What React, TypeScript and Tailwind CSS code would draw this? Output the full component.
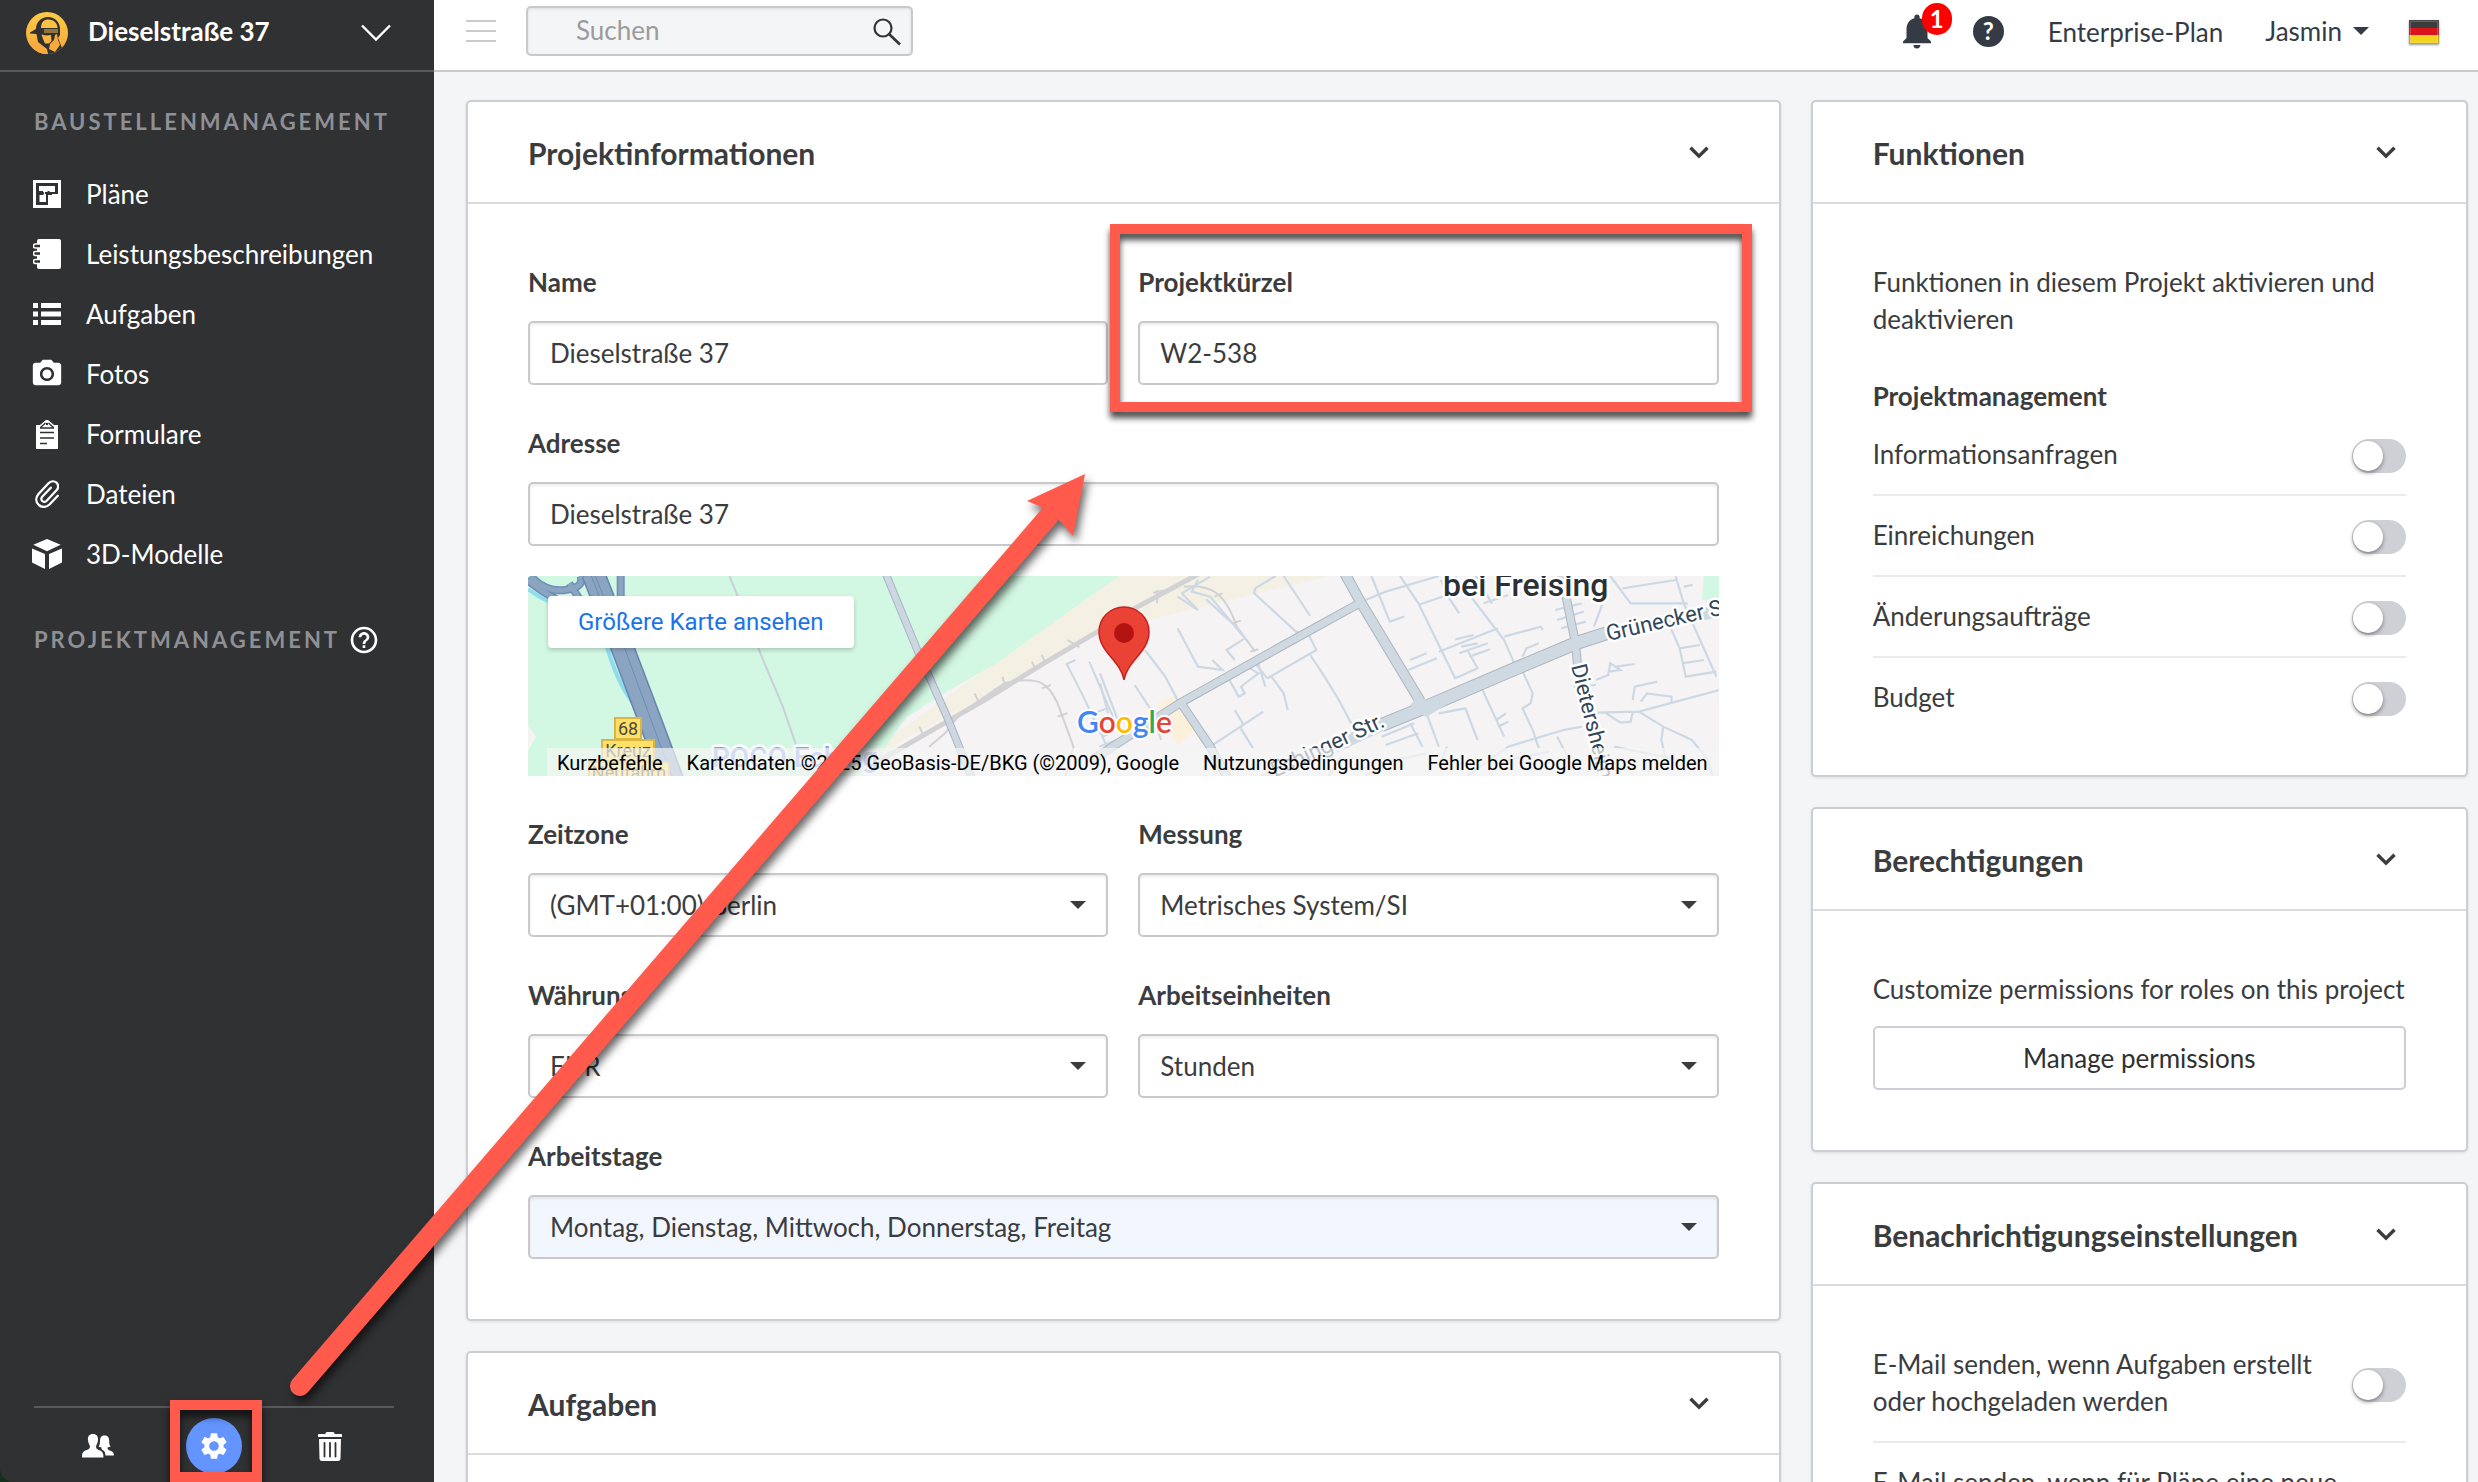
import React from "react";
import { MdHelpOutline, MdNotifications, MdPhotoCamera, MdSettings } from "react-icons/md";

type IconProps = { className?: string };

const LogoIcon = () => (
  <svg viewBox="0 0 42 42" className="size-[42px] shrink-0" aria-hidden="true">
    <defs>
      <linearGradient id="logo-fill" x1="0" y1="0" x2="0" y2="1">
        <stop offset="0" stopColor="#fccb46" />
        <stop offset="1" stopColor="#f7a63c" />
      </linearGradient>
      <clipPath id="logo-clip">
        <circle cx="21" cy="21" r="21" />
      </clipPath>
    </defs>
    <g clipPath="url(#logo-clip)">
      <rect width="42" height="42" fill="url(#logo-fill)" />
      <path
        d="M4 20.500L10 17C10 10 15 5 22 5C29 5 34 10 34 17V23L32 26L36 36L30 42H22L21 37L12 30L10.500 22L4 21.500Z"
        fill="#303133"
      />
      <path d="M15 16C15 10 18 7.500 22.500 7.500C27.500 7.500 31.500 11 31.500 16Z" fill="#fbc044" />
      <path d="M18 18H32M18 20H32" stroke="#f9b53f" strokeWidth="1" />
      <path d="M15.500 22.500L20 23.500L25 23L25.500 29L23 31.500H19L17 27Z" fill="#f9b53f" />
      <path d="M31 22L32 28L34 33L29 40L23 37L24 32L28 28L29 23Z" fill="#f8aa3c" />
      <path d="M4 29L12 31L20 38L22 42H8Z" fill="#f8aa3c" />
    </g>
  </svg>
);

const PlanIcon = ({ className }: IconProps) => (
  <svg viewBox="0 0 28 28" className={className} fill="currentColor" aria-hidden="true">
    <path fillRule="evenodd" d="M0 0H28V28H0Z M3 3V25H15V15H19V14H25V3Z" />
    <path d="M6 6H22V12H16.500V11H14.500V12H12V14H13V22H6.500V15H10V11H6Z" />
    <path d="M8.500 12.200H11V14.500H8.500Z" fill="#303133" />
  </svg>
);

const NotebookIcon = ({ className }: IconProps) => (
  <svg viewBox="0 0 28 30" className={className} aria-hidden="true">
    <rect x="4" y="0" width="24" height="30" rx="2" fill="currentColor" />
    <path
      d="M7 5H2.500a1.500 1.500 0 0 0 0 4H7M7 12.500H2.500a1.500 1.500 0 0 0 0 4H7M7 20.500H2.500a1.500 1.500 0 0 0 0 4H7"
      fill="#303133"
      stroke="currentColor"
      strokeWidth="1.500"
    />
  </svg>
);

const ListIcon = ({ className }: IconProps) => (
  <svg viewBox="0 0 28 22" className={className} fill="currentColor" aria-hidden="true">
    <path d="M0 0H5V5H0ZM8 0H28V5H8ZM0 8.500H5V13.500H0ZM8 8.500H28V13.500H8ZM0 17H5V22H0ZM8 17H28V22H8Z" />
  </svg>
);

const ClipboardIcon = ({ className }: IconProps) => (
  <svg viewBox="0 0 22 29" className={className} aria-hidden="true">
    <path d="M0 5H4L9 .800a3 3 0 0 1 4 0L18 5H22V29H0Z" fill="currentColor" />
    <path d="M4 8H18M4.500 7.500L9.500 3M17.500 7.500L12.500 3" stroke="#303133" strokeWidth="1.300" fill="none" />
    <circle cx="11" cy="4" r="1.200" fill="#303133" />
    <path d="M4 12.500H18M4 18H18M4 23.500H11" stroke="#303133" strokeWidth="1.600" />
  </svg>
);

const ClipIcon = ({ className }: IconProps) => (
  <svg viewBox="0 0 24 28" className={className} fill="none" stroke="currentColor" strokeWidth="2.300" strokeLinecap="round" aria-hidden="true">
    <path d="M22.800 15.800L14.500 24.500C11.500 27.500 7 27.700 3.800 25 C.500 22 .500 17.500 3.500 14L13.500 3.300C15.800 .900 19.300 .700 21.500 2.700C23.700 4.800 23.700 8 21.500 10.300L11.700 20.700C10.300 22.100 8.500 22.100 7.300 21C6 19.800 6 18 7.400 16.500L15.800 7.700" />
  </svg>
);

const CubeIcon = ({ className }: IconProps) => (
  <svg viewBox="0 0 30 30" className={className} fill="currentColor" aria-hidden="true">
    <path d="M1.300 5.800L15 0L28.700 5.800L15 12.300ZM0 9.500L13 15V30L0 23.500ZM30 9.500L17 15V30L30 23.500Z" />
  </svg>
);

const PeopleIcon = ({ className }: IconProps) => (
  <svg viewBox="0 0 32 24" className={className} fill="currentColor" aria-hidden="true">
    <path d="M11 0C7.500 0 5.600 2.300 6 6C6.200 9 7.500 10.500 8 12.500C8 15 6 15.500 4 16.200C.800 17.400 0 19 0 23.500H21.500C21.500 19 20.500 17.400 17.500 16.200C15.500 15.500 14 15 14 12.500C14.600 10.500 15.800 9 16 6C16.300 2.300 14.500 0 11 0Z" />
    <path d="M22.500 1.500C19.300 1.500 18 3.500 18 7C17.900 10 17.500 11.500 16.500 12.500C18 13.200 18.800 13.300 19.500 13.400C19.500 15.500 19.500 15.500 21.500 16.500C23 17.500 23.300 19.500 23.500 21.500H32C32 18.800 31 17.500 28.500 16.700C26.500 16 25.500 15.500 25.500 13.400C26.500 13.300 27.500 13 28.800 12.500C27.500 11.500 27.200 10 27.200 7C27.200 3.500 25.800 1.500 22.500 1.500Z" />
  </svg>
);

const TrashIcon = ({ className }: IconProps) => (
  <svg viewBox="0 0 24 29" className={className} aria-hidden="true">
    <path d="M1 2H7L8.500 0H15.500L17 2H23a1 1 0 0 1 1 1V5H0V3a1 1 0 0 1 1-1ZM1 7H23L22.500 26.500C22.500 28 21.500 29 20 29H4C2.500 29 1.500 28 1.500 26.500Z" fill="currentColor" />
    <path d="M6.500 11V24.500M12 11V24.500M17.500 11V24.500" stroke="#303133" strokeWidth="1.800" strokeLinecap="round" />
  </svg>
);

const Caret = ({ className }: IconProps) => (
  <svg viewBox="0 0 16 8" className={className} fill="currentColor" aria-hidden="true">
    <path d="M0 0H16L8 8Z" />
  </svg>
);

const ChevronSmall = () => (
  <svg viewBox="0 0 20 13" className="h-[13px] w-5" fill="none" stroke="currentColor" strokeWidth="3.400" aria-hidden="true">
    <path d="M1.500 1.800L10 10.200L18.500 1.800" />
  </svg>
);

const GermanFlag = () => (
  <svg viewBox="0 0 30 24" className="h-6 w-[30px] drop-shadow-[0_1px_1px_rgba(0,0,0,0.4)]" role="img" aria-label="Deutsch">
    <rect width="30" height="8" fill="#3c3c3c" />
    <rect y="8" width="30" height="7" fill="#d9141b" />
    <rect y="15" width="30" height="9" fill="#f3d31c" />
    <rect x="1" y="1" width="28" height="22" fill="none" stroke="#ffffff" strokeOpacity="0.200" strokeWidth="2" />
    <rect x=".5" y=".5" width="29" height="23" fill="none" stroke="#000000" strokeOpacity="0.250" />
  </svg>
);

const navItems = [
  { label: "Pläne", icon: <PlanIcon className="size-7" /> },
  { label: "Leistungsbeschreibungen", icon: <NotebookIcon className="h-[30px] w-7" /> },
  { label: "Aufgaben", icon: <ListIcon className="h-[22px] w-7" /> },
  { label: "Fotos", icon: <MdPhotoCamera className="size-[34px]" /> },
  { label: "Formulare", icon: <ClipboardIcon className="h-[29px] w-[22px]" /> },
  { label: "Dateien", icon: <ClipIcon className="h-7 w-6" /> },
  { label: "3D-Modelle", icon: <CubeIcon className="size-[30px]" /> },
];

function Sidebar() {
  return (
    <div className="w-[434px] shrink-0 bg-[#16301c]">
      <aside className="flex h-full flex-col rounded-bl-[14px] bg-[#303133] text-white">
        <button type="button" className="flex h-[72px] shrink-0 items-center border-b-2 border-[#58595b] pr-[43px] pb-1 pl-[26px] text-left">
          <LogoIcon />
          <span className="ml-5 flex-1 pb-1 text-[26px] leading-8 font-bold">Dieselstraße 37</span>
          <svg viewBox="0 0 30 18" className="h-[18px] w-[30px]" fill="none" stroke="currentColor" strokeWidth="2.400" aria-hidden="true">
            <path d="M1 1.500L15 15.500L29 1.500" />
          </svg>
        </button>
        <h2 className="mt-[30px] pl-[34px] text-[22px] leading-10 font-bold tracking-[3px] text-[#8f9096]">BAUSTELLENMANAGEMENT</h2>
        <nav className="mt-[22px]">
          <ul>
            {navItems.map((item) => (
              <li key={item.label}>
                <a href="#" className="flex h-[60px] items-center">
                  <span className="ml-[30px] flex w-[34px] shrink-0 justify-center">{item.icon}</span>
                  <span className="ml-[22px] text-[26px] leading-8">{item.label}</span>
                </a>
              </li>
            ))}
          </ul>
        </nav>
        <div className="mt-9 flex items-center gap-2 pl-[34px]">
          <h2 className="text-[22px] leading-10 font-bold tracking-[3px] text-[#8f9096]">PROJEKTMANAGEMENT</h2>
          <button type="button" aria-label="Hilfe zum Projektmanagement">
            <MdHelpOutline className="size-8" />
          </button>
        </div>
        <footer className="mr-10 ml-[34px] mt-auto grid h-[76px] grid-cols-3 items-center border-t-2 border-[#58595b] pt-[2px]">
          <button type="button" aria-label="Benutzer" className="flex justify-center pl-2">
            <PeopleIcon className="h-6 w-8" />
          </button>
          <div className="relative flex justify-center">
            <button type="button" aria-label="Einstellungen" className="flex size-14 items-center justify-center rounded-full bg-[#6394ff]">
              <MdSettings className="size-8" />
            </button>
            <div className="pointer-events-none absolute -top-[18px] right-3 left-4 h-[82px] border-10 border-[#ff5a4b] drop-shadow-[0_6px_4px_rgba(0,0,0,0.7)]" />
          </div>
          <button type="button" aria-label="Löschen" className="flex justify-center pr-2">
            <TrashIcon className="h-[29px] w-6" />
          </button>
        </footer>
      </aside>
    </div>
  );
}

function TopBar() {
  return (
    <header className="flex h-[72px] shrink-0 items-center border-b-2 border-[#c9c9cb] bg-white pr-[39px] pb-2 pl-8 text-[#353b45]">
      <button type="button" aria-label="Menü" className="flex w-[30px] flex-col gap-2">
        <span className="h-[2px] bg-[#cbcbcd]" />
        <span className="h-[2px] bg-[#cbcbcd]" />
        <span className="h-[2px] bg-[#cbcbcd]" />
      </button>
      <form role="search" className="relative ml-[30px] h-[50px] w-[387px]">
        <input
          type="search"
          aria-label="Suchen"
          placeholder="Suchen"
          className="h-full w-full rounded-[5px] border-2 border-[#c8c9cb] bg-[#f4f5f7] pr-14 pb-[2px] pl-12 text-[26px] shadow-[inset_0_1px_3px_rgba(0,0,0,0.1)] outline-none placeholder:text-[#9b9b9b]"
        />
        <svg viewBox="0 0 28 28" className="absolute top-3 right-3 size-7" fill="none" stroke="#333436" strokeWidth="2.200" aria-hidden="true">
          <circle cx="10" cy="10" r="8.500" />
          <path d="M16 16L27 26.500" strokeWidth="2.600" />
        </svg>
      </form>
      <div className="ml-auto flex items-center text-[26px]">
        <button type="button" aria-label="Benachrichtigungen" className="relative mr-[35px]">
          <MdNotifications className="size-[42px]" />
          <span className="absolute -top-[7px] -right-[14px] flex h-8 w-[30px] items-center justify-center rounded-full bg-[#ff0000] text-[24px] leading-none font-bold text-white">
            1
          </span>
        </button>
        <button type="button" aria-label="Hilfe" className="flex size-[31px] items-center justify-center rounded-full bg-[#353b45] text-[24px] leading-none font-bold text-white">
          ?
        </button>
        <a href="#" className="ml-[44px] pt-[2px]">Enterprise-Plan</a>
        <button type="button" className="ml-[42px] flex items-center gap-[11px]">
          Jasmin
          <Caret className="h-2 w-4" />
        </button>
        <button type="button" className="ml-[40px] pt-[2px]">
          <GermanFlag />
        </button>
      </div>
    </header>
  );
}

function Card({ title, children }: { title: string; children?: React.ReactNode }) {
  return (
    <section className="rounded-[5px] border-2 border-[#cdced3] bg-white shadow-[0_1px_3px_rgba(0,0,0,0.1)]">
      <header className="flex h-[102px] items-center justify-between border-b-2 border-[#dbdbdd] pr-[70px] pl-[60px]">
        <h2 className="pt-[2px] text-[30px] leading-10 font-bold">{title}</h2>
        <button type="button" aria-label={`${title} ein- oder ausklappen`}>
          <ChevronSmall />
        </button>
      </header>
      {children}
    </section>
  );
}

const fieldBox =
  "h-16 w-full appearance-none rounded-[5px] border-2 border-[#c9c9cb] px-5 text-[26px] shadow-[inset_0_2px_3px_rgba(0,0,0,0.08)] outline-none";

function Field({ id, label, children, className = "" }: { id: string; label: string; children: React.ReactNode; className?: string }) {
  return (
    <div className={`relative min-w-0 ${className}`}>
      <label htmlFor={id} className="mb-[21px] block text-[26px] leading-9 font-bold">
        {label}
      </label>
      {children}
    </div>
  );
}

function SelectField({ id, label, value, className, tint = false }: { id: string; label: string; value: string; className?: string; tint?: boolean }) {
  return (
    <Field id={id} label={label} className={className}>
      <div className="relative">
        <select id={id} className={`${fieldBox} ${tint ? "bg-[#f2f6fe]" : "bg-white"} pr-14`}>
          <option>{value}</option>
        </select>
        <Caret className="pointer-events-none absolute top-7 right-[22px] h-2 w-4" />
      </div>
    </Field>
  );
}

const minorRoads = [
  "M200 100L270 50M200 100L240 150L190 110M240 60L225 95L270 110L355 235L310 270L330 300",
  "M190 205L240 320L300 330L275 300M260 118L325 190M380 85L430 48M380 85L378 100L480 215L510 222L530 270L410 355",
  "M450 48L515 168M310 345L340 410L355 400L345 380L388 340L360 320",
  "M385 300L405 380M380 310L410 355M420 350L450 400L460 450M515 285L550 350L585 420L620 500",
  "M0 340L50 500M85 375L125 450L150 540M110 270L160 350L190 420M0 370L20 460",
  "M270 560L400 455M345 505L375 565M345 505L350 490L330 450",
  "M665 48L710 185L745 170M650 120L700 95L830 48M735 48L780 130L870 355L925 325L900 270",
  "M780 135L850 105L880 160M850 100L835 60M830 275L975 205M870 238L915 225M885 260L925 250M880 280L950 250M905 290L955 268",
  "M870 48L990 240L1015 310M940 130L1000 105M990 230L1080 200L1085 210M920 48L960 130M755 330L825 295M760 300L800 280",
  "M1030 320L1060 400L1055 430L1035 445L1060 510L1075 565M935 385L990 530M970 480L995 460M975 500L1000 485",
  "M830 460L895 445L925 540M800 460L830 560M700 555L780 520M690 530L770 490M760 490L790 560M900 648L1000 560L1135 510L1180 500",
  "M1035 290L1045 265L1075 250M1115 150L1180 130M1120 180L1185 155M1130 205L1190 185M1230 135L1210 200",
  "M1250 48L1300 130L1440 130M1280 85L1410 60M1410 48L1430 130L1470 240L1510 350M1430 80L1452 75",
  "M1390 180L1420 265L1470 255M1420 265L1435 350L1510 335M1425 310L1480 300",
  "M1215 458L1320 455L1517 390M1240 460L1275 488L1300 485L1305 455M1320 455L1380 500L1450 540L1490 600L1500 648",
  "M1305 420L1310 380L1365 365M1325 425L1340 400L1400 410L1400 430M1380 500L1375 540L1385 590M1215 360L1245 345L1250 310L1275 330L1245 335M1265 320L1310 312",
  "M650 648L720 600L800 580M520 600L610 560M560 648L590 590M1000 600L1100 575M1120 530L1150 600M850 560L830 620M1260 560L1420 600M1160 380L1215 375",
];

function MapView() {
  return (
    <div className="relative mt-[30px] h-[200px] overflow-hidden bg-[#f5f3f4] font-['Roboto',sans-serif]">
      <svg viewBox="0 0 1191 200" preserveAspectRatio="xMinYMin slice" className="block h-full w-full" role="img" aria-label="Karte von Dieselstraße 37">
        <g transform="translate(-18 -16) scale(0.3954 0.3333)" fill="none">
          <path d="M860 648L930 560L1540 40H2100L1490 215L1130 455L985 545L900 648Z" fill="#f4f0e4" />
          <path d="M46 48H1540L1230 310L1090 405L1000 475L950 560L910 648H46Z" fill="#d2f7e2" />
          <path d="M46 495L66 530L46 570Z" fill="#f5f3f4" />
          <path d="M46 88L75 110L100 125M245 260Q270 360 300 410T345 520L365 570" stroke="#8edcf0" strokeWidth="4" vectorEffect="non-scaling-stroke" />
          <path d="M52 48Q90 98 140 90T178 48M46 62Q80 95 120 120M150 70L175 115M280 48V110" stroke="#6d8eb4" strokeWidth="8" vectorEffect="non-scaling-stroke" />
          <path d="M52 48Q90 98 140 90T178 48M46 62Q80 95 120 120M150 70L175 115M280 48V110" stroke="#8aa4c2" strokeWidth="5" vectorEffect="non-scaling-stroke" />
          <path d="M210 40L285 265L360 500L410 660" stroke="#6485ae" strokeWidth="24" vectorEffect="non-scaling-stroke" />
          <path d="M210 40L285 265L360 500L410 660" stroke="#8aa4c2" strokeWidth="21" vectorEffect="non-scaling-stroke" />
          <path d="M213 40L290 265L363 500L413 660M203 40L278 265" stroke="#6d8eb4" strokeWidth="1" vectorEffect="non-scaling-stroke" />
          <path d="M555 48L585 135L640 300L690 440L725 560" stroke="#c9d0d8" strokeWidth="2" vectorEffect="non-scaling-stroke" />
          <path d="M930 605L1200 420L1350 310L1500 205L1580 145L1760 30" stroke="#d2d2d5" strokeWidth="5" vectorEffect="non-scaling-stroke" />
          <path d="M1060 560L1100 520L1140 460L1250 370C1340 345 1360 370 1385 430L1425 560L1405 648M1035 500L1045 525M1175 400L1185 425M1225 385L1232 405M1245 350L1252 375M1320 305L1330 330M1345 285L1352 305M1410 240L1440 262M1385 470L1410 460M1345 385L1368 375" stroke="#d2d2d5" strokeWidth="2" vectorEffect="non-scaling-stroke" />
          <path d="M1430 300L1408 312L1450 410L1510 560L1568 530M1465 305L1525 470M1475 460L1510 445M1485 480L1500 530L1525 515M1490 560L1555 530" stroke="#cbd8e4" strokeWidth="2" vectorEffect="non-scaling-stroke" />
          <path d="M950 40L1030 270L1105 470L1170 660" stroke="#a9b5c3" strokeWidth="8" vectorEffect="non-scaling-stroke" />
          <path d="M950 40L1030 270L1105 470L1170 660" stroke="#cdd7e1" strokeWidth="6" vectorEffect="non-scaling-stroke" />
        </g>
        <g transform="translate(572 -16) scale(0.4082 0.3333)" fill="none">
          <path d="M140 430L180 410L215 440L245 500L190 555L160 490Z" fill="#fbf0da" />
          <path d="M1480 40H1530V125L1475 120Z" fill="#d2f7e2" />
          <path d="M205 80C280 70 310 110 335 200L380 275M280 110L300 100M325 190L345 182M368 275L388 268M140 90V130M130 98L155 92" stroke="#d2d2d5" strokeWidth="2" vectorEffect="non-scaling-stroke" />
          {minorRoads.map((d) => (
            <path key={d} d={d} stroke="#ccd9e5" strokeWidth="2.200" vectorEffect="non-scaling-stroke" />
          ))}
          <g stroke="#adb6bf">
            <path d="M-20 600L195 430L450 255L635 130M200 432L270 560L315 660M1130 40L1165 250L1170 320" strokeWidth="9" vectorEffect="non-scaling-stroke" />
            <path d="M595 30L640 130L785 425" strokeWidth="11" vectorEffect="non-scaling-stroke" />
            <path d="M690 495L800 440L1000 335L1165 250L1240 220" strokeWidth="14" vectorEffect="non-scaling-stroke" />
          </g>
          <g stroke="#cfd9e2">
            <path d="M-20 600L195 430L450 255L635 130M200 432L270 560L315 660M1130 40L1165 250L1170 320" strokeWidth="7" vectorEffect="non-scaling-stroke" />
            <path d="M595 30L640 130L785 425" strokeWidth="9" vectorEffect="non-scaling-stroke" />
            <path d="M400 660L690 495L800 440L1000 335L1165 250L1240 220L1530 150" strokeWidth="12" vectorEffect="non-scaling-stroke" />
            <path d="M770 420L800 450L840 420" strokeWidth="12" vectorEffect="non-scaling-stroke" />
          </g>
        </g>
        <g stroke="#ffffff" strokeWidth="5" strokeLinejoin="round" paintOrder="stroke" fill="#33475b" fontSize="22">
          <text x="915" y="20" fontSize="32" fontWeight="500" fill="#2b2f36">bei Freising</text>
          <text transform="translate(1080 65) rotate(-13)">Grünecker Str.</text>
          <text transform="translate(1043 90) rotate(76)">Dietersheim</text>
          <text transform="translate(858 150) rotate(-25)" textAnchor="end">Echinger Str.</text>
          <text x="184" y="191" fontSize="28" fontWeight="500" fill="#7fa2ee">POCO Eching</text>
        </g>
        <g fontSize="18" textAnchor="middle" fill="#4d4a3c">
          <g fill="#ffe168" stroke="#deb441" strokeWidth="2">
            <rect x="87" y="142" width="26" height="21" />
            <rect x="74" y="164" width="52" height="21" />
            <rect x="61" y="186" width="80" height="21" />
          </g>
          <text x="100" y="159">68</text>
          <text x="100" y="181">Kreuz</text>
          <text x="101" y="203">Neufahrn</text>
        </g>
        <text x="549" y="157" fontSize="30" fontFamily="Lato, sans-serif" fontWeight="600" stroke="#ffffff" strokeWidth="4" strokeLinejoin="round" paintOrder="stroke">
          <tspan fill="#4285f4">G</tspan>
          <tspan fill="#ea4335">o</tspan>
          <tspan fill="#fbbc04">o</tspan>
          <tspan fill="#4285f4">g</tspan>
          <tspan fill="#34a853">l</tspan>
          <tspan fill="#ea4335">e</tspan>
        </text>
        <path d="M596 104C593 85 571 76 571 56A25 25 0 0 1 621 56C621 76 599 85 596 104Z" fill="#ea4335" stroke="#c5221f" strokeWidth="1.500" />
        <circle cx="596" cy="57" r="10" fill="#b31412" />
      </svg>
      <a
        href="#"
        className="absolute top-5 left-5 flex h-[52px] items-center rounded-[4px] bg-white px-[30px] text-[24px] text-[#1a73e8] shadow-[0_2px_4px_rgba(0,0,0,0.2)]"
      >
        Größere Karte ansehen
      </a>
      <div className="absolute right-0 bottom-0 left-[19px] flex h-7 items-center justify-between bg-[#f5f5f5]/70 pt-[2px] pr-[11px] pl-[10px] text-[20px] text-black">
        <button type="button">Kurzbefehle</button>
        <span>Kartendaten ©2025 GeoBasis-DE/BKG (©2009), Google</span>
        <a href="#">Nutzungsbedingungen</a>
        <a href="#">Fehler bei Google Maps melden</a>
      </div>
    </div>
  );
}

function ToggleRow({ id, label, divider = true, className = "" }: { id: string; label: string; divider?: boolean; className?: string }) {
  return (
    <div className={`flex items-center justify-between gap-3 pb-[21px] ${divider ? "border-b-2 border-[#ebebec]" : ""} ${className}`}>
      <label htmlFor={id} className="text-[26px] leading-[37px]">
        {label}
      </label>
      <input
        id={id}
        type="checkbox"
        role="switch"
        className="relative mt-[3px] h-[34px] w-[54px] shrink-0 appearance-none rounded-full bg-[#cfd0d6] before:absolute before:top-[2px] before:left-[1px] before:size-[30px] before:rounded-full before:bg-white before:shadow-[0_2px_4px_rgba(0,0,0,0.4)] checked:bg-[#6394ff] checked:before:left-[22px]"
      />
    </div>
  );
}

function ProjectInfo() {
  return (
    <Card title="Projektinformationen">
      <div className="grid grid-cols-2 gap-x-[30px] gap-y-10 px-[60px] pt-[60px] pb-[60px]">
        <Field id="name" label="Name">
          <input id="name" type="text" defaultValue="Dieselstraße 37" className={`${fieldBox} bg-white`} />
        </Field>
        <Field id="code" label="Projektkürzel">
          <input id="code" type="text" defaultValue="W2-538" className={`${fieldBox} bg-white`} />
          <div className="pointer-events-none absolute -top-10 -right-[33px] -bottom-[27px] -left-7 border-10 border-[#ff5a4b] drop-shadow-[0_6px_3px_rgba(0,0,0,0.7)]" />
        </Field>
        <div className="col-span-2">
          <Field id="address" label="Adresse">
            <input id="address" type="text" defaultValue="Dieselstraße 37" className={`${fieldBox} bg-white`} />
          </Field>
          <MapView />
        </div>
        <SelectField id="timezone" label="Zeitzone" value="(GMT+01:00) Berlin" />
        <SelectField id="units" label="Messung" value="Metrisches System/SI" />
        <SelectField id="currency" label="Währung" value="EUR" />
        <SelectField id="work-units" label="Arbeitseinheiten" value="Stunden" />
        <SelectField id="workdays" label="Arbeitstage" value="Montag, Dienstag, Mittwoch, Donnerstag, Freitag" className="col-span-2" tint />
      </div>
    </Card>
  );
}

const Arrow = () => (
  <svg
    viewBox="0 0 1120 1420"
    className="pointer-events-none absolute top-0 left-0 h-[1420px] w-[1120px] drop-shadow-[3px_6px_4px_rgba(0,0,0,0.6)]"
    fill="#ff5a4b"
    aria-hidden="true"
  >
    <path d="M300 1386L1054 510" stroke="#ff5a4b" strokeWidth="20" strokeLinecap="round" />
    <path d="M1085 474L1027 501L1044 508L1062 523L1073 536Z" />
  </svg>
);

export default function App() {
  return (
    <div className="relative flex h-screen overflow-hidden bg-[#f4f5f7] font-['Lato',sans-serif] text-[#3b3c3e]">
      <Sidebar />
      <div className="flex min-w-0 flex-1 flex-col">
        <TopBar />
        <main className="grid min-h-0 flex-1 grid-cols-[2fr_1fr] items-start gap-[30px] overflow-hidden pt-7 pr-[10px] pl-8">
          <div className="flex min-w-0 flex-col gap-[30px]">
            <ProjectInfo />
            <Card title="Aufgaben">
              <div className="h-40" />
            </Card>
          </div>
          <div className="flex min-w-0 flex-col gap-[30px]">
            <Card title="Funktionen">
              <div className="px-[60px] pt-[60px] pb-[38px]">
                <p className="text-[26px] leading-[37px]">Funktionen in diesem Projekt aktivieren und deaktivieren</p>
                <h3 className="mt-10 text-[26px] leading-[37px] font-bold">Projektmanagement</h3>
                <ToggleRow id="rfi" label="Informationsanfragen" className="pt-[21px]" />
                <ToggleRow id="submittals" label="Einreichungen" className="pt-[21px]" />
                <ToggleRow id="change-orders" label="Änderungsaufträge" className="pt-[21px]" />
                <ToggleRow id="budget" label="Budget" divider={false} className="pt-[21px]" />
              </div>
            </Card>
            <Card title="Berechtigungen">
              <div className="px-[60px] pt-[60px] pb-[60px]">
                <p className="text-[26px] leading-[37px]">Customize permissions for roles on this project</p>
                <button type="button" className="mt-[18px] h-16 w-full rounded-[5px] border-2 border-[#cdced6] bg-white text-[26px] text-[#2f3032]">
                  Manage permissions
                </button>
              </div>
            </Card>
            <Card title="Benachrichtigungseinstellungen">
              <div className="px-[60px] pt-[60px] pb-[60px]">
                <ToggleRow id="mail-tasks" label="E-Mail senden, wenn Aufgaben erstellt oder hochgeladen werden" />
                <ToggleRow id="mail-plans" label="E-Mail senden, wenn für Pläne eine neue Version hochgeladen wird" className="pt-[21px]" />
              </div>
            </Card>
          </div>
        </main>
      </div>
      <Arrow />
    </div>
  );
}
